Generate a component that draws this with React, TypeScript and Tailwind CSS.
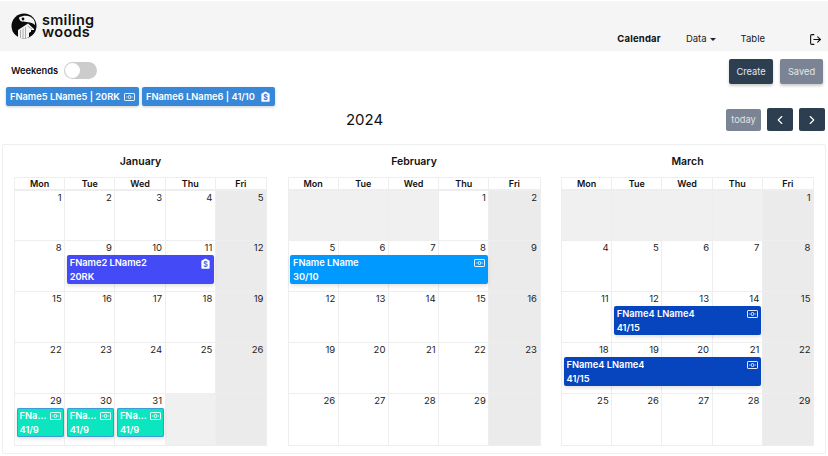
import React from 'react';
import { ChevronLeft, ChevronRight, LogOut } from 'lucide-react';

type EventInfo = {
  start: number;
  span: number;
  title: string;
  sub: string;
  color: string;
  icon: 'bill' | 'tag';
};

type Cell = { day?: number; weekend?: boolean };

type Week = { cells: Cell[]; events?: EventInfo[] };

const makeWeek = (days: (number | null)[], events?: EventInfo[]): Week => ({
  cells: days.map((d, i) => ({ day: d ?? undefined, weekend: i === 4 })),
  events,
});

const teal = 'bg-[#0be5c0] ring-1 ring-inset ring-[#3f9bd8]';

const months = [
  {
    name: 'January',
    weeks: [
      makeWeek([1, 2, 3, 4, 5]),
      makeWeek([8, 9, 10, 11, 12], [
        { start: 2, span: 3, title: 'FName2 LName2', sub: '20RK', color: 'bg-[#444bf6]', icon: 'tag' },
      ]),
      makeWeek([15, 16, 17, 18, 19]),
      makeWeek([22, 23, 24, 25, 26]),
      makeWeek([29, 30, 31, null, null], [
        { start: 1, span: 1, title: 'FName3 LName3', sub: '41/9', color: teal, icon: 'bill' },
        { start: 2, span: 1, title: 'FName3 LName3', sub: '41/9', color: teal, icon: 'bill' },
        { start: 3, span: 1, title: 'FName3 LName3', sub: '41/9', color: teal, icon: 'bill' },
      ]),
    ],
  },
  {
    name: 'February',
    weeks: [
      makeWeek([null, null, null, 1, 2]),
      makeWeek([5, 6, 7, 8, 9], [
        { start: 1, span: 4, title: 'FName LName', sub: '30/10', color: 'bg-[#0099ff]', icon: 'bill' },
      ]),
      makeWeek([12, 13, 14, 15, 16]),
      makeWeek([19, 20, 21, 22, 23]),
      makeWeek([26, 27, 28, 29, null]),
    ],
  },
  {
    name: 'March',
    weeks: [
      makeWeek([null, null, null, null, 1]),
      makeWeek([4, 5, 6, 7, 8]),
      makeWeek([11, 12, 13, 14, 15], [
        { start: 2, span: 3, title: 'FName4 LName4', sub: '41/15', color: 'bg-[#0645bd]', icon: 'bill' },
      ]),
      makeWeek([18, 19, 20, 21, 22], [
        { start: 1, span: 4, title: 'FName4 LName4', sub: '41/15', color: 'bg-[#0645bd]', icon: 'bill' },
      ]),
      makeWeek([25, 26, 27, 28, 29]),
    ],
  },
];

const spanClass: Record<number, string> = {
  1: 'col-span-1',
  3: 'col-span-3',
  4: 'col-span-4',
};

const startClass: Record<number, string> = {
  1: 'col-start-1',
  2: 'col-start-2',
  3: 'col-start-3',
};

const TagIcon = () => (
  <svg viewBox="0 0 12 12" className="h-[11px] w-[11px] shrink-0">
    <path d="M6 0.5 L10.5 3 V11 a0.6 0.6 0 0 1 -0.6 0.6 H2.1 a0.6 0.6 0 0 1 -0.6 -0.6 V3 Z" fill="#ffffff" />
    <text x="6" y="9.6" textAnchor="middle" fontSize="7.5" fontWeight="700" fill="#3f6fd8" fontFamily="Inter, sans-serif">
      $
    </text>
  </svg>
);

const BillIcon = () => (
  <svg viewBox="0 0 11 8" className="h-[8px] w-[11px] shrink-0" fill="none" stroke="#ffffff" strokeWidth="0.9">
    <rect x="0.5" y="0.5" width="10" height="7" rx="0.6" />
    <circle cx="5.5" cy="4" r="1.5" />
    <path d="M2.2 4 H2.9 M8.1 4 H8.8" />
  </svg>
);

const Logo = () => (
  <svg viewBox="0 0 26 26" className="h-[26px] w-[26px]">
    <circle cx="13" cy="13" r="12.5" fill="#0b0b0b" />
    <path d="M8 4.5 C13 1.5 20 2 23 7 C24 9 24 11 24 12 C20 8.5 14 9 11 8.5 C9 8 8 6 8 4.5 Z" fill="#f5f5f5" />
    <circle cx="12" cy="6" r="1.4" fill="#0b0b0b" />
    <path d="M7 25 V17 L17 10.5 L23 16 V17 H20 V19 L18 20 V24 L15 25.5 H7 Z" fill="#f5f5f5" />
    <path d="M9.5 17 V25 M12 15.5 V25.5 M14.5 14 V25.5 M16.5 13 L21 16" stroke="#8a8a8a" strokeWidth="0.7" fill="none" />
    <path d="M18.5 19.5 L23 18.5 L21 22 Z" fill="#0b0b0b" />
  </svg>
);

const CalendarEvent = ({ event }: { event: EventInfo }) => (
  <div
    className={`${startClass[event.start]} ${spanClass[event.span]} mx-[1.5px] h-[29px] min-w-0 rounded-[2px] py-px pr-[3px] pl-[3px] text-[9.3px] leading-[14px] font-semibold text-white shadow-[0_2px_4px_rgba(0,0,0,0.12)] ${event.color}`}
  >
    <div className="flex h-[14px] min-w-0 items-center justify-between gap-[2px]">
      <span className="min-w-0 truncate">{event.title}</span>
      {event.icon === 'tag' ? <TagIcon /> : <BillIcon />}
    </div>
    <div>{event.sub}</div>
  </div>
);

const MonthTable = ({ name, weeks }: { name: string; weeks: Week[] }) => (
  <div className="w-[253px]">
    <h2 className="mb-[8px] pt-px text-center text-[10.5px] leading-[14px] font-semibold text-[#111]">{name}</h2>
    <div className="border border-[#eeeeee]">
      <div className="grid grid-cols-5 border-b-2 border-[#eeeeee]">
        {['Mon', 'Tue', 'Wed', 'Thu', 'Fri'].map((d, i) => (
          <div
            key={d}
            className={`h-[11px] text-center text-[9px] leading-[11px] font-semibold text-[#111] ${i < 4 ? 'border-r border-[#eeeeee]' : ''}`}
          >
            {d}
          </div>
        ))}
      </div>
      {weeks.map((week, w) => (
        <div
          key={w}
          className={`relative grid grid-cols-5 ${w === 0 ? 'h-[50px]' : 'h-[51px]'} ${w < 4 ? 'border-b border-[#eeeeee]' : ''}`}
        >
          {week.cells.map((cell, i) => (
            <div
              key={i}
              className={`pr-[2.5px] text-right text-[9.5px] leading-[13px] text-[#222] ${i < 4 ? 'border-r border-[#eeeeee]' : ''} ${
                cell.weekend ? 'bg-[#ebebeb]' : !cell.day ? 'bg-[#f0f0f0]' : 'bg-white'
              }`}
            >
              {cell.day}
            </div>
          ))}
          {week.events && (
            <div className="absolute inset-x-0 top-[14px] grid grid-cols-5">
              {week.events.map((event, i) => (
                <CalendarEvent key={i} event={event} />
              ))}
            </div>
          )}
        </div>
      ))}
    </div>
  </div>
);

const DraftChip = ({ label, icon }: { label: string; icon: React.ReactNode }) => (
  <div className="flex h-[19px] w-[133px] items-center justify-between rounded-[2px] bg-[#3788d8] px-[4px] text-[9.3px] font-semibold whitespace-nowrap text-white shadow-[0_1px_3px_rgba(0,0,0,0.2)]">
    {label}
    {icon}
  </div>
);

export default function App() {
  return (
    <div className="h-[456px] w-[828px] overflow-hidden bg-white font-['Inter',sans-serif]">
      <header className="mt-px flex h-[50px] items-end justify-between bg-[#f5f5f5] pr-[6px] pl-[11px]">
        <div className="mb-[12px] flex items-center gap-[5px]">
          <Logo />
          <div className="text-[14.5px] leading-[12.5px] font-semibold tracking-[0.3px] text-[#111]">
            <div>smiling</div>
            <div>woods</div>
          </div>
        </div>
        <nav className="mb-[5px] flex items-center text-[9.5px] leading-[14px] text-[#222]">
          <span className="mr-[25px] font-bold tracking-[0.2px] text-[#111]">Calendar</span>
          <span className="mr-[25px] flex items-center gap-[3px]">
            Data
            <span className="h-0 w-0 border-x-[3px] border-t-[3px] border-x-transparent border-t-[#222]" />
          </span>
          <span className="mr-[44px]">Table</span>
          <LogOut size={13} strokeWidth={2} className="text-[#111]" />
        </nav>
      </header>

      <div className="flex items-start justify-between pt-[8px] pr-[5px] pl-[11px]">
        <div className="flex items-center gap-[6px] pt-[3px]">
          <span className="text-[9.3px] font-semibold text-[#111]">Weekends</span>
          <div className="flex h-[17px] w-[33px] items-center rounded-full bg-[#cccccc]">
            <div className="h-[15px] w-[15px] translate-x-px rounded-full bg-white" />
          </div>
        </div>
        <div className="flex gap-[7px]">
          <button className="h-[25px] w-[44px] rounded-[2px] bg-[#2c3e50] text-[9.3px] text-[#e4e7ea] shadow-[0_2px_3px_rgba(0,0,0,0.2)]">
            Create
          </button>
          <button className="h-[25px] w-[43px] rounded-[2px] bg-[#7b8494] text-[9.3px] text-[#e4e7ea] shadow-[0_2px_3px_rgba(0,0,0,0.2)]">
            Saved
          </button>
        </div>
      </div>

      <div className="mt-[3px] flex gap-[3px] pl-[6px]">
        <DraftChip label="FName5 LName5 | 20RK" icon={<BillIcon />} />
        <DraftChip label="FName6 LName6 | 41/10" icon={<TagIcon />} />
      </div>

      <div className="mt-[2px] flex items-center justify-between pr-[3px] pl-[3px]">
        <div />
        <h1 className="text-[15px] leading-[23px] text-[#111]">2024</h1>
        <div className="flex items-center gap-[6px]">
          <button className="h-[22px] w-[35px] rounded-[2px] bg-[#7b8494] text-[9.3px] text-[#dfe2e6]">today</button>
          <button className="flex h-[23px] w-[26px] items-center justify-center rounded-[2px] bg-[#2c3e50] text-white">
            <ChevronLeft size={14} strokeWidth={2} />
          </button>
          <button className="flex h-[23px] w-[26px] items-center justify-center rounded-[2px] bg-[#2c3e50] text-white">
            <ChevronRight size={14} strokeWidth={2} />
          </button>
        </div>
      </div>

      <main className="mx-[2px] mt-[13px] flex h-[310px] justify-between rounded-[2px] border border-[#eeeeee] px-[11px] pt-[9px]">
        {months.map((m) => (
          <MonthTable key={m.name} name={m.name} weeks={m.weeks} />
        ))}
      </main>
    </div>
  );
}
